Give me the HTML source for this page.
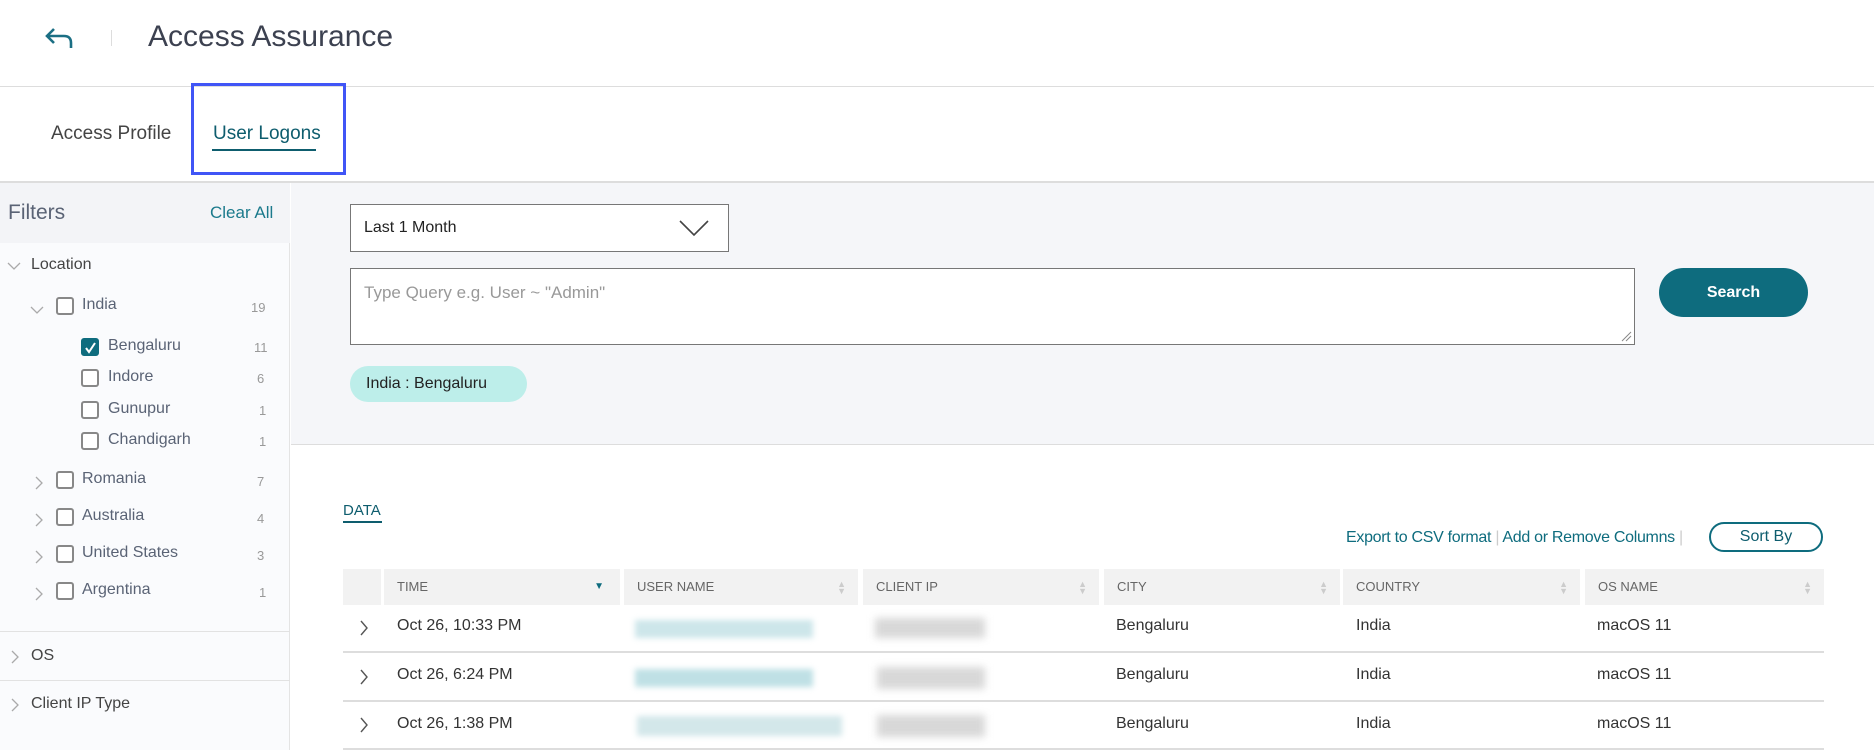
<!DOCTYPE html>
<html><head><meta charset="utf-8"><style>
*{margin:0;padding:0;box-sizing:border-box}
body{width:1874px;height:750px;overflow:hidden;background:#fff;font-family:"Liberation Sans",sans-serif;position:relative;color:#333}
.a{position:absolute;white-space:nowrap}
.cb{position:absolute;width:18px;height:18px;border:2px solid #888;border-radius:3px;background:#fff}
.side{color:#5a6375;font-size:16px}
.cnt{color:#999;font-size:13px}
.th{position:absolute;top:569px;height:36px;background:#f2f2f2;font-size:13px;color:#666;line-height:36px;padding-left:13px}
.td{position:absolute;font-size:16px;color:#333}
.hl{position:absolute;left:343px;width:1481px;height:2px;background:#ddd}
.sort{position:absolute;right:12px;top:12px;color:#ccc;font-size:9px;line-height:7px}
</style></head><body>
<svg class="a" style="left:44px;top:26px" width="32" height="26" viewBox="0 0 32 26"><path d="M10 3 L3 10 L10 17 M3 10 H20 Q27 10 27 17 V22" fill="none" stroke="#1b6f84" stroke-width="2.6"/></svg>
<div class="a" style="left:111px;top:30px;width:1px;height:16px;background:#ddd"></div>
<div class="a" style="left:148px;top:20px;font-size:30px;color:#3c4150">Access Assurance</div>
<div class="a" style="left:0;top:86px;width:1874px;height:1px;background:#ddd"></div>
<div class="a" style="left:51px;top:123px;font-size:19px;color:#444">Access Profile</div>
<div class="a" style="left:213px;top:123px;font-size:19px;color:#0e5d6e">User Logons</div>
<div class="a" style="left:212px;top:149px;width:104px;height:2px;background:#0e5d6e"></div>
<div class="a" style="left:191px;top:83px;width:155px;height:92px;border:3px solid #4055f6"></div>
<div class="a" style="left:0;top:181px;width:1874px;height:2px;background:#ddd"></div>
<div class="a" style="left:0;top:183px;width:290px;height:567px;background:#fafbfd;border-right:1px solid #e4e4e4"></div>
<div class="a" style="left:0;top:183px;width:290px;height:60px;background:#f3f4f7"></div>
<div class="a" style="left:8px;top:201px;font-size:21px;color:#5a6375">Filters</div>
<div class="a" style="left:210px;top:203px;font-size:17px;color:#1b7a8c">Clear All</div>
<svg class="a" style="left:7px;top:261px" width="14" height="10"><path d="M1 2 L7 8 L13 2" fill="none" stroke="#aaa" stroke-width="1.3"/></svg>
<div class="a" style="left:31px;top:256px;font-size:16px;color:#444">Location</div>
<svg class="a" style="left:30px;top:305px" width="14" height="10"><path d="M1 2 L7 8 L13 2" fill="none" stroke="#aaa" stroke-width="1.3"/></svg>
<div class="cb" style="left:56px;top:297px"></div><div class="a side" style="left:82px;top:296px">India</div><div class="a cnt" style="left:251px;top:300px">19</div>
<div class="cb" style="left:81px;top:338px;background:#0e6c7e;border-color:#0e6c7e"></div><svg class="a" style="left:84px;top:341px" width="13" height="13"><path d="M2 7 L5 11 L11 2" fill="none" stroke="#fff" stroke-width="2"/></svg>
<div class="a side" style="left:108px;top:337px">Bengaluru</div><div class="a cnt" style="left:254px;top:340px">11</div>
<div class="cb" style="left:81px;top:369px"></div><div class="a side" style="left:108px;top:368px">Indore</div><div class="a cnt" style="left:257px;top:371px">6</div>
<div class="cb" style="left:81px;top:401px"></div><div class="a side" style="left:108px;top:400px">Gunupur</div><div class="a cnt" style="left:259px;top:403px">1</div>
<div class="cb" style="left:81px;top:432px"></div><div class="a side" style="left:108px;top:431px">Chandigarh</div><div class="a cnt" style="left:259px;top:434px">1</div>
<svg class="a" style="left:34px;top:475px" width="10" height="16"><path d="M2 2 L8 8 L2 14" fill="none" stroke="#aaa" stroke-width="1.3"/></svg><div class="cb" style="left:56px;top:471px"></div><div class="a side" style="left:82px;top:470px">Romania</div><div class="a cnt" style="left:257px;top:474px">7</div>
<svg class="a" style="left:34px;top:512px" width="10" height="16"><path d="M2 2 L8 8 L2 14" fill="none" stroke="#aaa" stroke-width="1.3"/></svg><div class="cb" style="left:56px;top:508px"></div><div class="a side" style="left:82px;top:507px">Australia</div><div class="a cnt" style="left:257px;top:511px">4</div>
<svg class="a" style="left:34px;top:549px" width="10" height="16"><path d="M2 2 L8 8 L2 14" fill="none" stroke="#aaa" stroke-width="1.3"/></svg><div class="cb" style="left:56px;top:545px"></div><div class="a side" style="left:82px;top:544px">United States</div><div class="a cnt" style="left:257px;top:548px">3</div>
<svg class="a" style="left:34px;top:586px" width="10" height="16"><path d="M2 2 L8 8 L2 14" fill="none" stroke="#aaa" stroke-width="1.3"/></svg><div class="cb" style="left:56px;top:582px"></div><div class="a side" style="left:82px;top:581px">Argentina</div><div class="a cnt" style="left:259px;top:585px">1</div>
<div class="a" style="left:0;top:631px;width:290px;height:1px;background:#e2e2e2"></div>
<svg class="a" style="left:10px;top:649px" width="10" height="16"><path d="M2 2 L8 8 L2 14" fill="none" stroke="#aaa" stroke-width="1.3"/></svg><div class="a" style="left:31px;top:647px;font-size:16px;color:#444">OS</div>
<div class="a" style="left:0;top:680px;width:290px;height:1px;background:#e2e2e2"></div>
<svg class="a" style="left:10px;top:697px" width="10" height="16"><path d="M2 2 L8 8 L2 14" fill="none" stroke="#aaa" stroke-width="1.3"/></svg><div class="a" style="left:31px;top:695px;font-size:16px;color:#444">Client IP Type</div>
<div class="a" style="left:291px;top:183px;width:1583px;height:262px;background:#f5f6f9;border-bottom:1px solid #ddd"></div>
<div class="a" style="left:350px;top:204px;width:379px;height:48px;background:#fff;border:1px solid #777"></div>
<div class="a" style="left:364px;top:219px;font-size:16px;color:#222">Last 1 Month</div>
<svg class="a" style="left:678px;top:218px" width="32" height="20"><path d="M2 3 L16 17 L30 3" fill="none" stroke="#444" stroke-width="1.6"/></svg>
<div class="a" style="left:350px;top:268px;width:1285px;height:77px;background:#fff;border:1px solid #777"></div>
<div class="a" style="left:364px;top:283px;font-size:17px;color:#999">Type Query e.g. User ~ "Admin"</div>
<svg class="a" style="left:1621px;top:331px" width="11" height="11"><path d="M1 10 L10 1 M5 10 L10 5" stroke="#888"/></svg>
<div class="a" style="left:1659px;top:268px;width:149px;height:49px;background:#0e6c7e;border-radius:25px;color:#fff;font-size:16px;font-weight:bold;text-align:center;line-height:49px">Search</div>
<div class="a" style="left:350px;top:366px;width:177px;height:36px;background:#bdeeea;border-radius:18px;font-size:16px;color:#222;line-height:36px;padding-left:16px">India : Bengaluru</div>
<div class="a" style="left:343px;top:502px;font-size:15px;color:#0e5d6e">DATA</div>
<div class="a" style="left:343px;top:521px;width:39px;height:2px;background:#0e5d6e"></div>
<div class="a" style="left:1346px;top:529px;font-size:16px;letter-spacing:-0.3px;color:#0e6c7e">Export to CSV format <span style="color:#ccc">|</span> Add or Remove Columns <span style="color:#ccc">|</span></div>
<div class="a" style="left:1709px;top:522px;width:114px;height:30px;border:2px solid #0e6c7e;border-radius:15px;text-align:center;line-height:26px;font-size:16px;color:#0e5d6e">Sort By</div>
<div class="th" style="left:343px;width:38px"></div>
<div class="th" style="left:384px;width:236px">TIME<span style="position:absolute;right:16px;color:#0e6c7e;font-size:10px">&#9660;</span></div>
<div class="th" style="left:624px;width:234px">USER NAME<div class="sort">▲<br>▼</div></div>
<div class="th" style="left:863px;width:236px">CLIENT IP<div class="sort">▲<br>▼</div></div>
<div class="th" style="left:1104px;width:236px">CITY<div class="sort">▲<br>▼</div></div>
<div class="th" style="left:1343px;width:237px">COUNTRY<div class="sort">▲<br>▼</div></div>
<div class="th" style="left:1585px;width:239px">OS NAME<div class="sort">▲<br>▼</div></div>
<svg class="a" style="left:359px;top:619px" width="10" height="18"><path d="M2 2 L8 9 L2 16" fill="none" stroke="#555" stroke-width="1.4"/></svg>
<div class="td" style="left:397px;top:617px">Oct 26, 10:33 PM</div>
<div class="a" style="left:635px;top:620px;width:178px;height:18px;background:#cde6ea;filter:blur(3px)"></div>
<div class="a" style="left:875px;top:618px;width:110px;height:20px;background:#d8d8d8;filter:blur(4px)"></div>
<div class="td" style="left:1116px;top:617px">Bengaluru</div><div class="td" style="left:1356px;top:617px">India</div><div class="td" style="left:1597px;top:617px">macOS 11</div>
<div class="hl" style="top:651px"></div>
<svg class="a" style="left:359px;top:668px" width="10" height="18"><path d="M2 2 L8 9 L2 16" fill="none" stroke="#555" stroke-width="1.4"/></svg>
<div class="td" style="left:397px;top:666px">Oct 26, 6:24 PM</div>
<div class="a" style="left:635px;top:669px;width:178px;height:18px;background:#bfe0e5;filter:blur(3px)"></div>
<div class="a" style="left:877px;top:667px;width:108px;height:22px;background:#d8d8d8;filter:blur(4px)"></div>
<div class="td" style="left:1116px;top:666px">Bengaluru</div><div class="td" style="left:1356px;top:666px">India</div><div class="td" style="left:1597px;top:666px">macOS 11</div>
<div class="hl" style="top:700px"></div>
<svg class="a" style="left:359px;top:716px" width="10" height="18"><path d="M2 2 L8 9 L2 16" fill="none" stroke="#555" stroke-width="1.4"/></svg>
<div class="td" style="left:397px;top:715px">Oct 26, 1:38 PM</div>
<div class="a" style="left:637px;top:716px;width:205px;height:20px;background:#d3e7ea;filter:blur(3px)"></div>
<div class="a" style="left:877px;top:715px;width:108px;height:22px;background:#d8d8d8;filter:blur(4px)"></div>
<div class="td" style="left:1116px;top:715px">Bengaluru</div><div class="td" style="left:1356px;top:715px">India</div><div class="td" style="left:1597px;top:715px">macOS 11</div>
<div class="hl" style="top:748px"></div>
</body></html>
